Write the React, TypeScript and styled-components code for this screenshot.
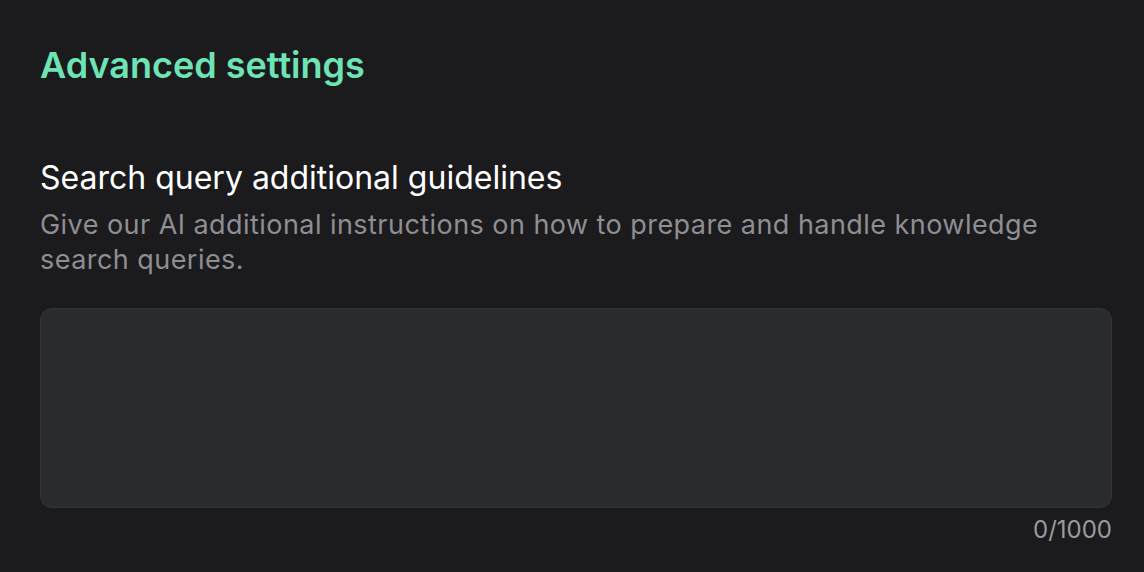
import React from 'react';
import styled, { createGlobalStyle } from 'styled-components';

const GlobalStyle = createGlobalStyle`
  html, body {
    margin: 0;
    padding: 0;
    background: #1b1a1d;
  }
  body {
    font-family: Inter, "Noto Sans", sans-serif;
  }
`;

const App = () => {
  return (
    <>
      <GlobalStyle />
      <Wrapper>
        <Title>Advanced settings</Title>
        <Field>
          <Label>Search query additional guidelines</Label>
          <Hint>
            Give our AI additional instructions on how to prepare and handle knowledge
            search queries.
          </Hint>
          <TextArea />
          <Counter>0/1000</Counter>
        </Field>
      </Wrapper>
    </>
  );
};

export default App;

const Wrapper = styled.div`
  width: 1144px;
  height: 572px;
  box-sizing: border-box;
  padding: 43px 32px 0 40px;
  background: #1b1a1d;
`;

const Title = styled.h2`
  margin: 0;
  font-size: 36px;
  line-height: 44px;
  font-weight: 600;
  color: #6ee3b4;
`;

const Field = styled.div`
  display: flex;
  flex-direction: column;
  margin-top: 71px;
`;

const Label = styled.div`
  font-size: 32px;
  line-height: 40px;
  color: #ffffff;
  font-weight: 400;
`;

const Hint = styled.p`
  margin: 9px 0 0;
  font-size: 27px;
  line-height: 35px;
  letter-spacing: 0.45px;
  color: #8e8e93;
  max-width: 1050px;
`;

const TextArea = styled.textarea`
  margin-top: 31px;
  height: 200px;
  box-sizing: border-box;
  width: 100%;
  resize: none;
  background: #2a2b2d;
  border: 1px solid #333436;
  border-radius: 12px;
  outline: none;
  color: #fff;
  font-family: inherit;
  font-size: 24px;
`;

const Counter = styled.div`
  margin-top: 7px;
  align-self: flex-end;
  font-size: 24px;
  line-height: 30px;
  color: #9a9a9e;
`;
